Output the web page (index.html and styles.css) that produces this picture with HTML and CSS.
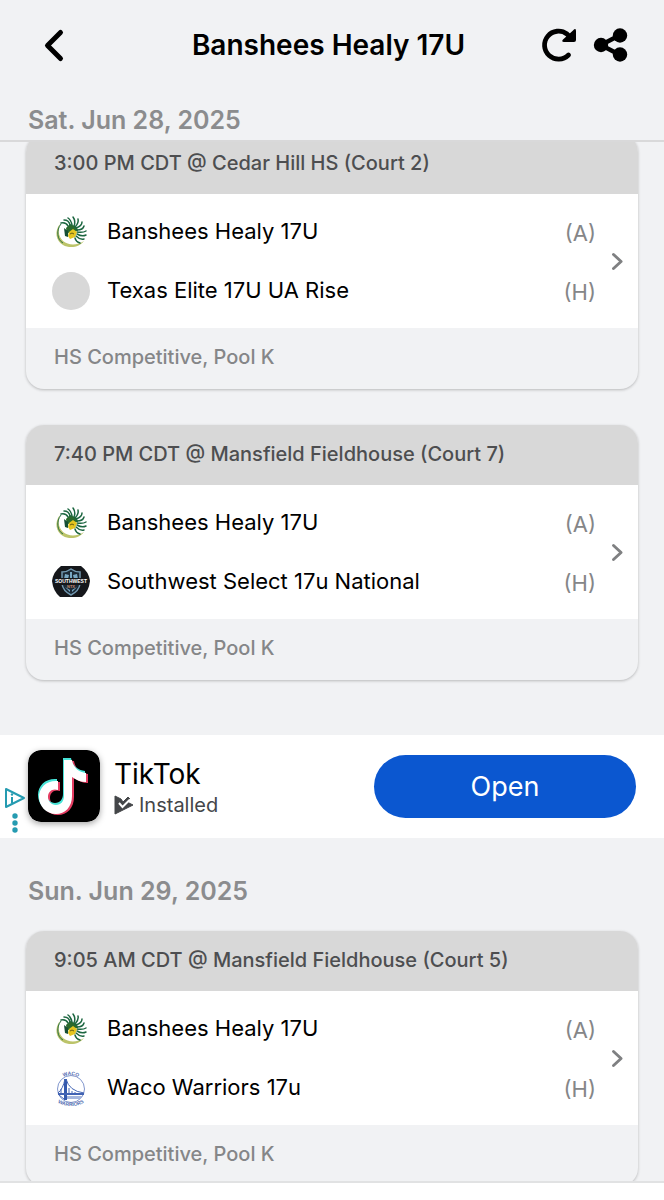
FILE: index.html
```html
<!DOCTYPE html>
<html lang="en">
<head>
<meta charset="utf-8">
<meta name="viewport" content="width=device-width, initial-scale=1">
<title>Banshees Healy 17U</title>
<link rel="stylesheet" href="styles.css">
</head>
<body>
<svg class="sprite" aria-hidden="true">
  <symbol id="banshee" viewBox="0 0 38 38">
    <path d="M8 11C2 18 4 28 11 32C18 36 28 34 32 28C26 32 17 33 11 28C6 23 6 17 8 11Z" fill="#bcc46a"/>
    <path d="M9 11C4 17 5 27 11 30" fill="none" stroke="#2c7045" stroke-width="1"/>
    <path d="M14 15L18 11L25 14L26 18L22 18L18 19L15 21Z" fill="#2b6a2c"/>
    <g fill="none" stroke="#1c6640" stroke-width="1.500" stroke-linecap="round">
      <path d="M16 13Q14 9 9 10"/><path d="M18 12Q17 7 12 7"/><path d="M20 12Q19 7 16 5"/><path d="M22 13Q24 8 21 4"/><path d="M23 14Q27 10 26 6"/><path d="M24 15Q30 13 30 9"/><path d="M25 17Q31 17 32 13"/><path d="M25 19Q31 20 34 18"/><path d="M25 21Q30 24 34 22"/><path d="M24 23Q28 27 32 26"/><path d="M23 25Q24 29 28 30"/>
    </g>
    <path d="M17 19L21 16L25 19L23 24L18 26L16 23Z" fill="#e5c51f"/>
    <path d="M12 15L16 18L16 24L13 23Z" fill="#174f35"/>
    <path d="M18 21L20 20L22 21" fill="none" stroke="#675d13" stroke-width="1"/>
  </symbol>
  <symbol id="chevron" viewBox="0 0 12 18"><path d="M3 3L9.500 9L3 15" fill="none" stroke="currentColor" stroke-width="2.500" stroke-linecap="round" stroke-linejoin="round"/></symbol>
</svg>
<div class="app">
  <header class="top">
    <div class="bar">
      <button class="icon-button" aria-label="Back"><svg width="36" height="36" viewBox="0 0 36 36"><path d="M24.500 5.500L11.500 18.500L24.500 31.500" fill="none" stroke="#000" stroke-width="5" stroke-linecap="round" stroke-linejoin="round"/></svg></button>
      <h1 class="title">Banshees Healy 17U</h1>
      <div class="actions">
        <button class="icon-button" aria-label="Refresh"><svg width="36" height="36" viewBox="0 0 36 36"><path d="M27.500 28A14 14 0 1 1 26 7L29 10" fill="none" stroke="#000" stroke-width="4.800" stroke-linecap="round"/><path d="M32 3.500Q35 .5 35 4V13Q35 15 33 15H23Q20 14.500 22 12.500Z" fill="#000"/></svg></button>
        <button class="icon-button" aria-label="Share"><svg width="36" height="36" viewBox="0 0 36 36"><path d="M27 8L8 18L27 28" fill="none" stroke="#000" stroke-width="4.500"/><g fill="#000"><circle cx="27" cy="8.500" r="7.200"/><circle cx="8" cy="18" r="7.200"/><circle cx="27" cy="27.500" r="7.200"/></g></svg></button>
      </div>
    </div>
    <h2 class="date">Sat. Jun 28, 2025</h2>
  </header>
  <main class="feed">
    <section class="games">
      <article class="card">
        <h3 class="when">3:00 PM CDT @ Cedar Hill HS (Court 2)</h3>
        <a class="match" href="#game-1">
          <span class="teams">
            <span class="team"><svg class="logo"><use href="#banshee"/></svg><span class="name">Banshees Healy 17U</span><span class="side">(A)</span></span>
            <span class="team"><span class="logo blank"></span><span class="name">Texas Elite 17U UA Rise</span><span class="side">(H)</span></span>
          </span>
          <svg class="more"><use href="#chevron"/></svg>
        </a>
        <p class="pool">HS Competitive, Pool K</p>
      </article>
      <article class="card">
        <h3 class="when">7:40 PM CDT @ Mansfield Fieldhouse (Court 7)</h3>
        <a class="match" href="#game-2">
          <span class="teams">
            <span class="team"><svg class="logo"><use href="#banshee"/></svg><span class="name">Banshees Healy 17U</span><span class="side">(A)</span></span>
            <span class="team">
              <svg class="logo" viewBox="0 0 38 38">
                <path d="M9 3H29Q37 9 38 18Q37 28 30 34H8Q1 28 0 18Q1 9 9 3Z" fill="#15171b"/>
                <path d="M19 6Q23 9 28 9V21Q27 28 19 32Q11 28 10 21V9Q15 9 19 6Z" fill="#1c2a36" stroke="#7298b0" stroke-width="1.500"/>
                <path d="M13 11L17 12L16 16H12ZM18 9H20V16H18ZM21 12L25 11L26 16H22ZM13 24L18 29V27ZM25 24L20 29V27Z" fill="#79a8c4"/>
                <path d="M3 15H35L33 22H5Z" fill="#15171b"/>
                <text x="19" y="20" text-anchor="middle" class="crest-name">SOUTHWEST</text>
                <text x="19" y="25" text-anchor="middle" class="crest-place">NTX</text>
              </svg>
              <span class="name">Southwest Select 17u National</span><span class="side">(H)</span></span>
          </span>
          <svg class="more"><use href="#chevron"/></svg>
        </a>
        <p class="pool">HS Competitive, Pool K</p>
      </article>
    </section>
    <aside class="ad">
      <div class="ad-marks">
        <svg width="22" height="22" viewBox="0 0 22 22"><path d="M2 2V20L20 11Z" fill="none" stroke="#259bb1" stroke-width="2" stroke-linejoin="round"/><path d="M8 10V16" fill="none" stroke="#259bb1" stroke-width="2"/><circle cx="8" cy="7.500" r="1.200" fill="#259bb1"/></svg>
        <svg width="22" height="20" viewBox="0 0 22 20"><g fill="#259bb1"><circle cx="11" cy="3" r="2.700"/><circle cx="11" cy="10" r="2.700"/><circle cx="11" cy="17" r="2.700"/></g></svg>
      </div>
      <svg class="ad-logo" viewBox="0 0 72 72">
        <rect width="72" height="72" rx="13" fill="#000"/>
        <defs><path id="note" d="M36 9H44C45 16 50 21 58 22V31C53 31 48 29 44 26V45C44 56 37 63 28 63C18 63 11 55 11 46C11 36 19 29 30 30V39C24 37 20 41 20 46C20 50 23 54 28 54C33 54 36 50 36 45Z"/></defs>
        <use href="#note" x="2" y="2" fill="#e43d62"/><use href="#note" x="-1" y="-1" fill="#48e3d7"/><use href="#note" x="0" y="1" fill="#fff"/>
      </svg>
      <div class="ad-text">
        <strong class="ad-name">TikTok</strong>
        <span class="ad-state"><svg width="20" height="20" viewBox="0 0 20 20"><path d="M1 1L7 4L9 7L14 2L16 4L13 7L19 10L1 19Z" fill="#444649" stroke="#444649" stroke-linejoin="round"/><path d="M5 8L8.500 12L16 4.500" fill="none" stroke="#fff" stroke-width="2"/></svg>Installed</span>
      </div>
      <button class="open">Open</button>
    </aside>
    <section class="games">
      <h2 class="date next-date">Sun. Jun 29, 2025</h2>
      <article class="card">
        <h3 class="when">9:05 AM CDT @ Mansfield Fieldhouse (Court 5)</h3>
        <a class="match" href="#game-3">
          <span class="teams">
            <span class="team"><svg class="logo"><use href="#banshee"/></svg><span class="name">Banshees Healy 17U</span><span class="side">(A)</span></span>
            <span class="team">
              <svg class="logo" viewBox="0 0 38 38">
                <path id="waco-top" d="M5 13Q19 -1 33 13" fill="none"/>
                <circle cx="19" cy="20" r="13.500" fill="#fff" stroke="#8196cd" stroke-width="1"/>
                <path d="M12 10H15V31H12Z" fill="#3459ad"/>
                <path d="M6 24H32V26H6Z" fill="#4263b3"/>
                <path d="M13 10Q11 20 6 24M14 10Q17 22 32 24M7 26L12 30M15 29H28M17 19V24M20 22V25M23 23V25M9 20V25" fill="none" stroke="#4567b6" stroke-width="1"/>
                <path d="M15 27H31L28 30H15Z" fill="#a5b6dd"/>
                <path id="waco-bottom" d="M3 32Q19 42 35 32" fill="none"/>
                <text class="waco-name"><textPath href="#waco-top" startOffset="50%" text-anchor="middle">WACO</textPath></text>
                <text class="waco-name"><textPath href="#waco-bottom" startOffset="50%" text-anchor="middle">WARRIORS</textPath></text>
              </svg>
              <span class="name">Waco Warriors 17u</span><span class="side">(H)</span></span>
          </span>
          <svg class="more"><use href="#chevron"/></svg>
        </a>
        <p class="pool">HS Competitive, Pool K</p>
      </article>
    </section>
  </main>
  <footer class="dock"></footer>
</div>
</body>
</html>
```

FILE: styles.css
```css
* { box-sizing: border-box; }
body { margin: 0; background: #f1f2f4; color: #000; font-family: Inter, "Open Sans", sans-serif; }
h1, h2, h3, p { margin: 0; }
button { padding: 0; border: 0; background: none; font: inherit; cursor: pointer; }
svg { display: block; flex: none; }
.sprite { position: absolute; width: 0; height: 0; }
.app { display: flex; flex-direction: column; height: 100vh; }
.top { flex: none; border-bottom: 2px solid #d9d9da; }
.bar { display: grid; grid-template-columns: 1fr auto 1fr; align-items: center; padding: 25px 35px 25px 36px; }
.icon-button { justify-self: start; line-height: 0; }
.title { padding: 1px 8px 0 0; font-size: 28px; line-height: 39px; font-weight: 600; }
.actions { display: flex; gap: 16px; justify-self: end; }
.date { padding: 0 28px; color: #8b8c8e; font-size: 25px; line-height: 40px; font-weight: 600; }
.top .date { margin-top: 10px; }
.feed { flex: 1; min-height: 0; overflow: hidden; }
.games { display: flex; flex-direction: column; gap: 36px; }
.card { margin: 0 26px; border-radius: 18px; overflow: hidden; background: #f1f2f4; box-shadow: 0 1px 3px rgba(0, 0, 0, .24); }
.games > .card:first-child { margin-top: -8px; }
.when { padding: 11px 28px 13px; background: #d8d8d8; color: #4d4e50; font-size: 20px; line-height: 36px; font-weight: 500; }
.match { display: flex; align-items: center; gap: 15px; padding: 19px 15px 18px 26px; background: #fff; color: inherit; text-decoration: none; }
.teams { flex: 1; display: grid; gap: 21px; }
.team { display: flex; align-items: center; }
.logo { width: 38px; height: 38px; margin-right: 17px; }
.blank { border-radius: 50%; background: #d8d8d8; }
.name { flex: 1; padding-bottom: 2px; font-size: 22px; line-height: 36px; }
.side { padding-top: 2px; color: #858688; font-size: 22px; line-height: 36px; }
.more { width: 14px; height: 21px; margin: 0 -1px; color: #7f8082; }
.pool { padding: 11px 28px 14px; color: #858688; font-size: 20px; line-height: 36px; font-weight: 500; }
.ad { display: flex; align-items: center; margin-top: 55px; padding: 15px 28px 16px 4px; background: #fff; }
.ad-marks { display: grid; gap: 4px; align-self: end; width: 24px; margin-bottom: -11px; }
.ad-logo { width: 72px; height: 72px; border-radius: 13px; box-shadow: 0 2px 6px rgba(0, 0, 0, .35); }
.ad-text { display: grid; flex: 1; padding: 4px 0 0 14px; }
.ad-name { font-size: 28px; line-height: 34px; font-weight: 400; }
.ad-state { display: flex; align-items: center; gap: 5px; color: #444649; font-size: 20px; line-height: 28px; }
.open { flex: 0 1 262px; height: 63px; border-radius: 32px; background: #0b57d0; color: #fff; font-size: 27px; }
.next-date { margin: 33px 0 -16px; }
.dock { flex: none; height: 19px; border-top: 2px solid #e1e2e3; background: #fff; }
.crest-name { fill: #fff; font: 700 5px "Liberation Sans", sans-serif; }
.crest-place { fill: #c9886a; font: 700 4px "Liberation Sans", sans-serif; }
.waco-name { fill: #526cb1; font: 700 5px "Liberation Sans", sans-serif; }
```
